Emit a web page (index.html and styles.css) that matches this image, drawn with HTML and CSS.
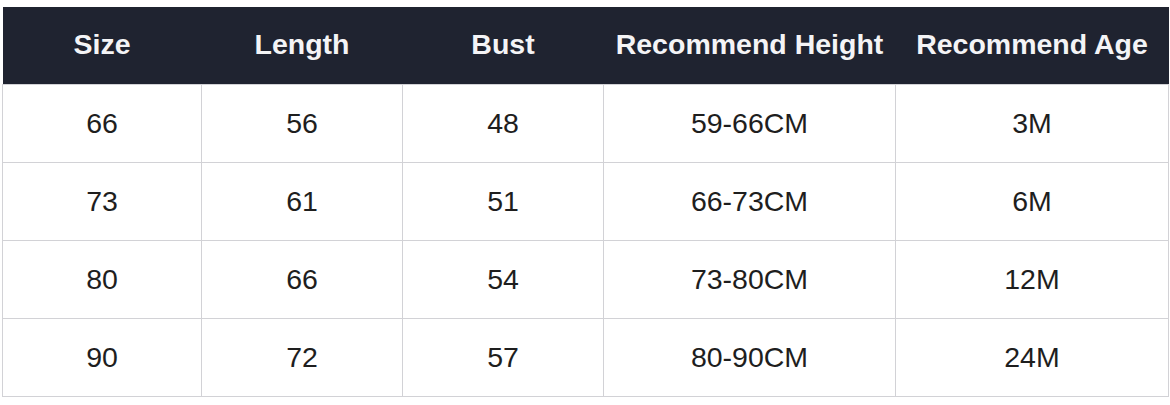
FILE: index.html
```html
<!DOCTYPE html>
<html>
<head>
<meta charset="utf-8">
<link rel="stylesheet" href="styles.css">
</head>
<body>
<div class="wrap">
<table class="size-table">
  <thead>
    <tr><th class="c1">Size</th><th class="c2">Length</th><th class="c3">Bust</th><th class="c4">Recommend Height</th><th class="c5">Recommend Age</th></tr>
  </thead>
  <tbody>
    <tr><td>66</td><td>56</td><td>48</td><td>59-66CM</td><td>3M</td></tr>
    <tr><td>73</td><td>61</td><td>51</td><td>66-73CM</td><td>6M</td></tr>
    <tr><td>80</td><td>66</td><td>54</td><td>73-80CM</td><td>12M</td></tr>
    <tr><td>90</td><td>72</td><td>57</td><td>80-90CM</td><td>24M</td></tr>
  </tbody>
</table>
</div>
</body>
</html>
```
FILE: styles.css
```css
html, body { margin: 0; padding: 0; background: #fff; }
.wrap { padding: 7px 2px 0 2px; }
.size-table {
  border-collapse: collapse;
  table-layout: fixed;
  width: 1166px;
  font-family: "Liberation Sans", Arial, sans-serif;
}
.size-table th {
  background: #1f2330;
  color: #f4f4f6;
  font-weight: bold;
  font-size: 28.5px;
  height: 75px;
  padding: 0 0 2px 0;
  text-align: center;
  white-space: nowrap;
}
.size-table td {
  border: 1px solid #d2d2d6;
  color: #1e1e1e;
  font-size: 28.5px;
  height: 77px;
  padding: 0;
  text-align: center;
}
.c1 { width: 199px; }
.c2 { width: 201px; }
.c3 { width: 201px; }
.c4 { width: 292px; }
.c5 { width: 273px; }
```
